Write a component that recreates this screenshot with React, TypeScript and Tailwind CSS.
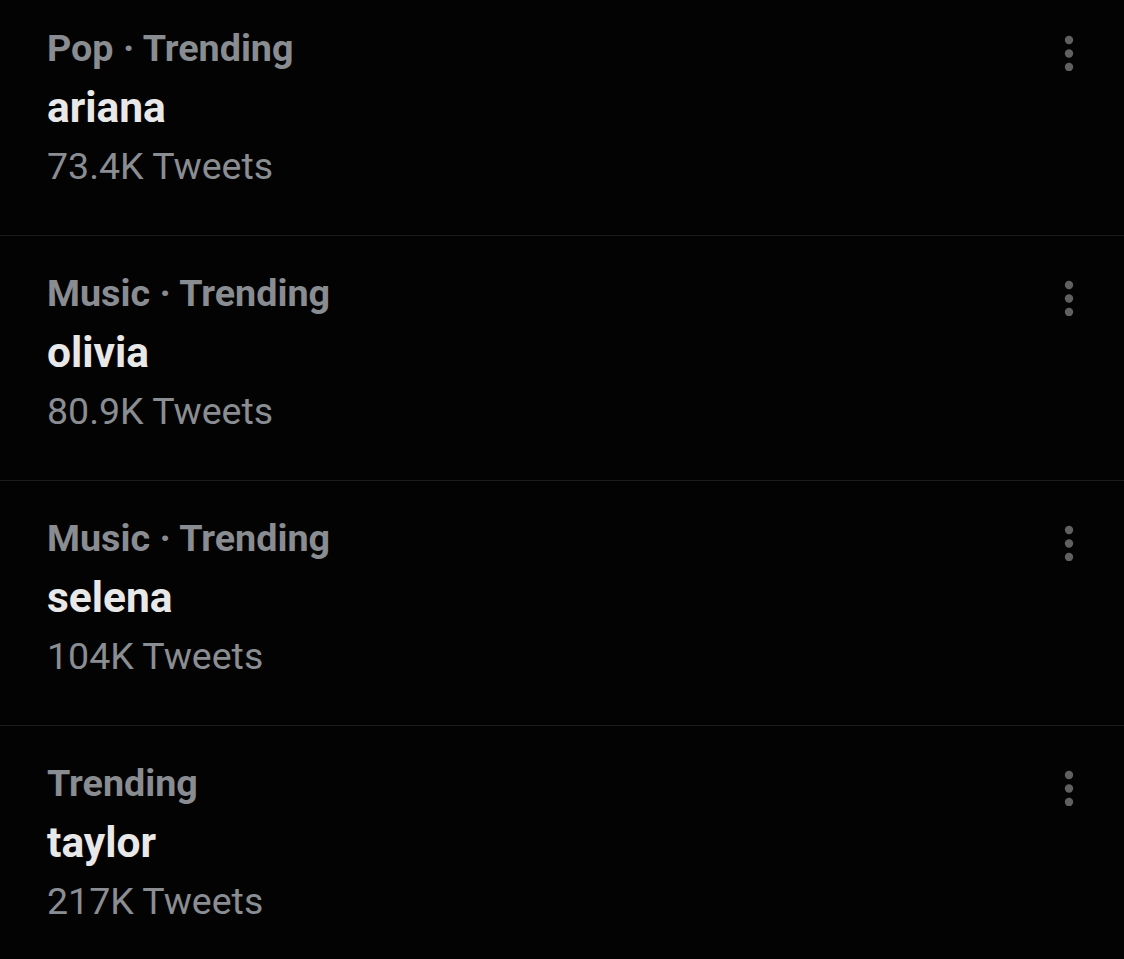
const trends = [
  { category: "Pop · Trending", name: "ariana", count: "73.4K Tweets" },
  { category: "Music · Trending", name: "olivia", count: "80.9K Tweets" },
  { category: "Music · Trending", name: "selena", count: "104K Tweets" },
  { category: "Trending", name: "taylor", count: "217K Tweets" },
];

function MoreIcon() {
  return (
    <svg width="10" height="36" viewBox="0 0 10 36" className="mt-[16px] shrink-0">
      <circle cx="5" cy="5" r="4.2" fill="#5f6062" />
      <circle cx="5" cy="18.5" r="4.2" fill="#5f6062" />
      <circle cx="5" cy="32" r="4.2" fill="#5f6062" />
    </svg>
  );
}

export default function App() {
  return (
    <div className="w-[1124px] h-[959px] overflow-hidden bg-[#030303] font-['Roboto',sans-serif]">
      {trends.map((t, i) => (
        <div
          key={t.name}
          className={
            i === 0
              ? "box-border h-[236px] pt-[19px] pl-[47px] pr-[50px] flex justify-between items-start border-b border-[#1c1c1d]"
              : "box-border h-[245px] pt-[28px] pl-[47px] pr-[50px] flex justify-between items-start border-b border-[#1c1c1d]"
          }
        >
          <div className="flex flex-col">
            <div className="text-[37.7px] leading-[59px] font-bold text-[#898c91]">{t.category}</div>
            <div className="text-[42.5px] leading-[59px] font-bold text-[#e8e8e8]">{t.name}</div>
            <div className="text-[37.5px] leading-[59px] text-[#8a8d92]">{t.count}</div>
          </div>
          <MoreIcon />
        </div>
      ))}
    </div>
  );
}
